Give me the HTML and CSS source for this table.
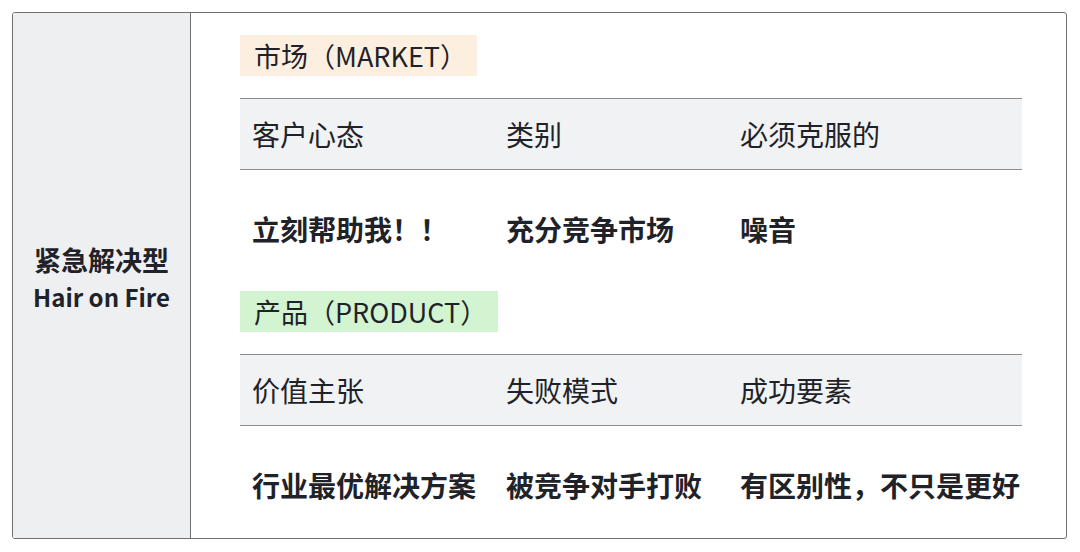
FILE: index.html
```html
<!DOCTYPE html>
<html lang="zh-CN">
<head>
<meta charset="utf-8">
<link rel="stylesheet" href="styles.css">
</head>
<body>
<div class="card">
  <div class="side">
    <div class="side-title">紧急解决型</div>
    <div class="side-sub">Hair on Fire</div>
  </div>
  <div class="main">
    <div class="tag tag-market">市场（MARKET）</div>
    <table class="grid">
      <colgroup><col class="c1"><col class="c2"><col class="c3"></colgroup>
      <tr class="head"><td>客户心态</td><td>类别</td><td>必须克服的</td></tr>
      <tr class="body"><td>立刻帮助我！！</td><td>充分竞争市场</td><td>噪音</td></tr>
    </table>
    <div class="tag tag-product">产品（PRODUCT）</div>
    <table class="grid">
      <colgroup><col class="c1"><col class="c2"><col class="c3"></colgroup>
      <tr class="head"><td>价值主张</td><td>失败模式</td><td>成功要素</td></tr>
      <tr class="body"><td>行业最优解决方案</td><td>被竞争对手打败</td><td>有区别性，不只是更好</td></tr>
    </table>
  </div>
</div>
</body>
</html>
```
FILE: styles.css
```css
html, body {
  margin: 0;
  padding: 0;
  background: #ffffff;
}
body {
  padding: 12px;
  font-family: "Noto Sans CJK SC", "Noto Sans", sans-serif;
  color: #1f2329;
}
.card {
  display: flex;
  width: 1055px;
  height: 527px;
  box-sizing: border-box;
  border: 1px solid #707070;
  border-radius: 3px;
  overflow: hidden;
}
.side {
  width: 178px;
  flex: none;
  background: #eeeff1;
  border-right: 1px solid #707070;
  display: flex;
  flex-direction: column;
  align-items: center;
  justify-content: center;
  font-weight: 700;
  font-size: 27px;
  line-height: 37px;
  padding-top: 4px;
  box-sizing: border-box;
}
.side-sub {
  font-size: 24px;
}
.main {
  flex: 1;
  padding: 22px 44px 0 49px;
  overflow: hidden;
}
.tag {
  display: inline-block;
  height: 41px;
  line-height: 41px;
  font-size: 27px;
  padding: 0 14px 0 14px;
  vertical-align: top;
}
.tag-market {
  background: #fdefe0;
  width: 237px;
  box-sizing: border-box;
}
.tag-product {
  background: #d2f4d0;
  width: 258px;
  box-sizing: border-box;
}
.grid {
  border-collapse: collapse;
  width: 782px;
  margin-top: 22px;
  table-layout: fixed;
  font-size: 28px;
}
.c1 { width: 254px; }
.c2 { width: 234px; }
.c3 { width: 294px; }
.grid td {
  padding: 0 0 0 12px;
  white-space: nowrap;
  overflow: visible;
}
.head td {
  background: #f1f2f4;
  border-top: 1px solid #8c8c8c;
  border-bottom: 1px solid #8c8c8c;
  height: 70px;
  line-height: 40px;
  font-weight: 400;
}
.body td {
  height: 121px;
  font-weight: 700;
  line-height: 40px;
  padding-top: 0;
  padding-bottom: 2px;
  box-sizing: border-box;
}
```
